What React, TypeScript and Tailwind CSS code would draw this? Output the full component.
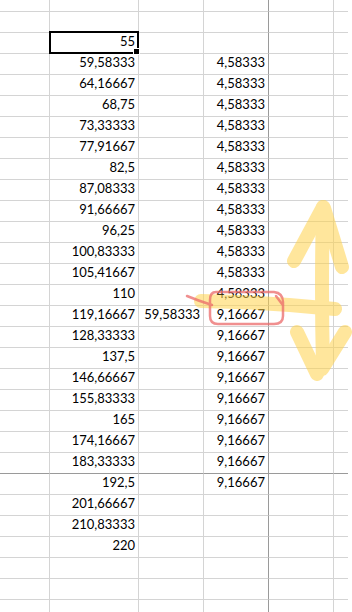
const fmt = (n: number) => {
  const s = (Math.round(n * 100000) / 100000).toString();
  return s.replace(".", ",");
};

type Row = { b?: string; c?: string; d?: string };

const rows: Row[] = [];
for (let r = 0; r < 29; r++) {
  const row: Row = {};
  if (r >= 1 && r <= 13) row.b = fmt(55 + (r - 1) * (55 / 12));
  if (r >= 14 && r <= 25) row.b = fmt(110 + (r - 13) * (110 / 12));
  if (r === 14) row.c = "59,58333";
  if (r >= 2 && r <= 13) row.d = "4,58333";
  if (r >= 14 && r <= 22) row.d = "9,16667";
  rows.push(row);
}

function Cell({ w, text, dark, darkBottom, last }: { w: string; text?: string; dark?: boolean; darkBottom?: boolean; last?: boolean }) {
  return (
    <div
      className={`${w} h-full shrink-0 border-b ${last ? "" : "border-r"} ${dark ? "border-r-[#9a9a9a]" : "border-r-[#d4d4d4]"} ${darkBottom ? "border-b-[#9a9a9a]" : "border-b-[#d4d4d4]"} pr-[3px] text-right text-[13px] leading-[16px] text-black`}
    >
      {text}
    </div>
  );
}

export default function App() {
  return (
    <div className="relative h-[612px] w-[352px] overflow-hidden bg-white" style={{ fontFamily: "Lato, 'Liberation Sans', sans-serif" }}>
      <div className="flex w-[348px] flex-col">
        <div className="flex h-[12px]">
          <Cell w="w-[50px]" />
          <Cell w="w-[89px]" />
          <Cell w="w-[65px]" />
          <Cell w="w-[65px]" dark />
          <Cell w="w-[65px]" />
          <Cell w="w-[14px]" last />
        </div>
        {rows.map((row, i) => (
          <div key={i} className="flex h-[21px]">
            <Cell w="w-[50px]" darkBottom={i === 21} />
            <Cell w="w-[89px]" text={row.b} darkBottom={i === 21} />
            <Cell w="w-[65px]" text={row.c} darkBottom={i === 21} />
            <Cell w="w-[65px]" text={row.d} dark darkBottom={i === 21} />
            <Cell w="w-[65px]" darkBottom={i === 21} />
            <Cell w="w-[14px]" darkBottom={i === 21} last />
          </div>
        ))}
      </div>

      {/* selected cell */}
      <div className="absolute left-[49px] top-[31px] h-[23px] w-[90px] border-2 border-black" />
      <div className="absolute left-[133px] top-[48px] h-[7px] w-[7px] border border-white bg-black" />

      {/* hand drawn marks */}
      <svg className="pointer-events-none absolute left-0 top-0" width="352" height="612" viewBox="0 0 352 612" fill="none">
        <g stroke="#ffd34d" strokeWidth="14" strokeLinecap="round" strokeLinejoin="round" opacity="0.55">
          <path d="M201 301 Q270 302 335 309" />
          <path d="M323 207 Q321 290 323 366" />
          <path d="M323 207 L294 261" />
          <path d="M324 208 L342 267" />
          <path d="M297 332 L317 374" />
          <path d="M345 332 L322 369" />
        </g>
        <g stroke="#ec6a6a" strokeWidth="2.5" strokeLinecap="round" strokeLinejoin="round" opacity="0.75">
          <path d="M187 296 Q199 301 212 305" />
          <path d="M216 292 L274 292 Q283 293 283 302 L283 316 Q283 324 274 324 L218 324 Q210 324 210 316 L210 300 Q210 292 216 292" />
          <path d="M276 296 L282 304" />
        </g>
      </svg>
    </div>
  );
}
